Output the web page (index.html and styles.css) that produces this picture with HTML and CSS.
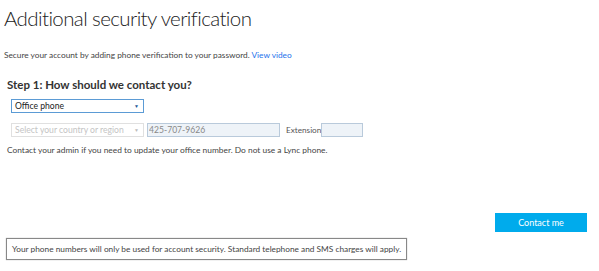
FILE: index.html
```html
<!DOCTYPE html>
<html lang="en">
<head>
    <meta charset="UTF-8">
    <meta name="viewport" content="width=device-width, initial-scale=1.0">
    <title>Additional security verification</title>
    <link rel="stylesheet" href="styles.css">
</head>
<body>
    <div class="page">
        <h1 class="title">Additional security verification</h1>
        <p class="intro">Secure your account by adding phone verification to your password. <a href="#">View video</a></p>

        <div class="step">
            <h2>Step 1: How should we contact you?</h2>

            <div class="select method">
                <span>Office phone</span>
                <span class="arrow">&#9660;</span>
            </div>

            <div class="phone-row">
                <div class="select country">
                    <span>Select your country or region</span>
                    <span class="arrow">&#9660;</span>
                </div>
                <input type="text" class="phone" value="425-707-9626" disabled>
                <label class="ext-label">Extension</label>
                <input type="text" class="ext" disabled>
            </div>

            <p class="note">Contact your admin if you need to update your office number. Do not use a Lync phone.</p>
        </div>

        <div class="actions">
            <button type="button">Contact me</button>
        </div>

        <div class="footer-note">Your phone numbers will only be used for account security. Standard telephone and SMS charges will apply.</div>
    </div>
</body>
</html>
```

FILE: styles.css
```css
body {
    margin: 0;
    font-family: "Segoe UI", Lato, sans-serif;
    color: #333;
    background: #fff;
}
.page {
    width: 599px;
    height: 271px;
    padding: 0 4px;
    box-sizing: border-box;
}
.title {
    margin: 0;
    padding-top: 3px;
    font-size: 20.5px;
    font-weight: 300;
    line-height: 30px;
    letter-spacing: -0.6px;
    color: #222;
}
.intro {
    margin: 16px 0 0;
    font-size: 8.3px;
    line-height: 12px;
    color: #444;
}
.intro a {
    color: #2672ec;
    text-decoration: none;
}
.step {
    padding-left: 3px;
}
.step h2 {
    margin: 17px 0 0;
    font-size: 11.5px;
    font-weight: 700;
    line-height: 14px;
    color: #333;
}
.select {
    display: flex;
    justify-content: space-between;
    align-items: center;
    width: 133px;
    height: 14px;
    box-sizing: border-box;
    padding: 0 4px 0 3px;
    font-size: 8.6px;
    border: 1px solid #ccc;
    background: #fff;
}
.select .arrow {
    font-size: 5px;
}
.method {
    margin: 7px 0 0 4px;
    border-color: #5b9bd5;
    color: #222;
}
.method .arrow {
    color: #1e5a96;
}
.phone-row {
    display: flex;
    align-items: center;
    margin: 10px 0 0 4px;
}
.country {
    color: #c4c4c4;
    border-color: #e0e0e0;
}
.country .arrow {
    color: #bbb;
}
input {
    font-family: inherit;
    height: 14px;
    box-sizing: border-box;
    border: 1px solid #b9cadb;
    background: #eef3f8;
    padding: 0 1px;
    margin: 0;
}
.phone {
    width: 133px;
    margin-left: 3px;
    font-size: 8.6px;
    color: #888;
}
.ext-label {
    margin-left: 6px;
    font-size: 8.2px;
    color: #555;
}
.ext {
    width: 42px;
    margin-left: 0;
}
.note {
    margin: 7px 0 0;
    font-size: 8.4px;
    line-height: 12px;
    color: #444;
}
.actions {
    display: flex;
    justify-content: flex-end;
    margin-top: 57px;
    padding-right: 8px;
}
.actions button {
    width: 92px;
    height: 19px;
    border: none;
    background: #00abec;
    color: #fff;
    font-family: inherit;
    font-size: 9px;
    cursor: pointer;
}
.footer-note {
    display: inline-block;
    margin: 6px 0 0 2px;
    padding: 4px 5px;
    font-size: 8.3px;
    line-height: 12px;
    color: #444;
    border: 1px solid #888;
    box-shadow: 0 0 1px #aaa;
}
```
